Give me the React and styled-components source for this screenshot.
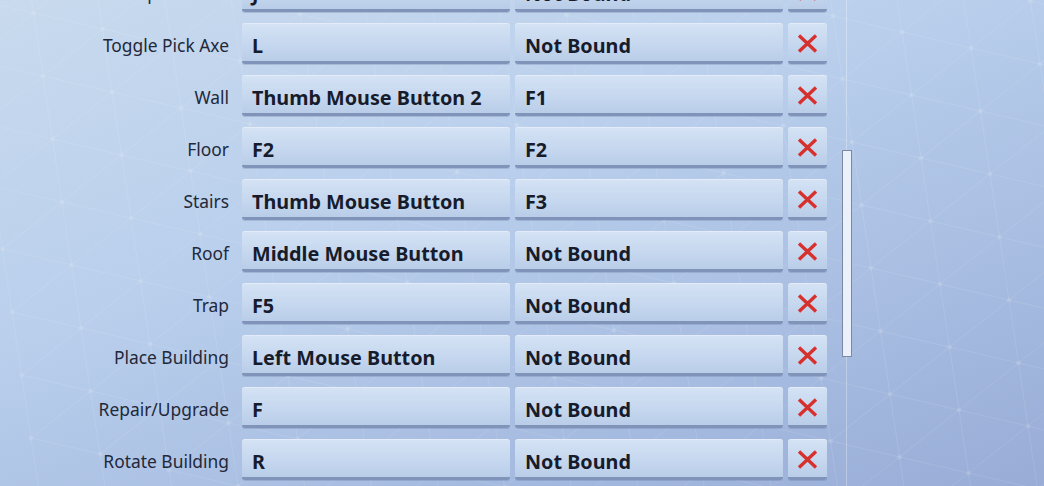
import React from "react";
import styled, { createGlobalStyle } from "styled-components";

const Global = createGlobalStyle`
  html, body { margin: 0; padding: 0; }
  body {
    width: 1044px;
    height: 486px;
    overflow: hidden;
    font-family: "Noto Sans", "Open Sans", sans-serif;
  }
`;

const Screen = styled.div`
  position: relative;
  width: 1044px;
  height: 486px;
  overflow: hidden;
  background: linear-gradient(160deg, #c9daee 0%, #b9cfec 40%, #a6bbe0 75%, #98acd6 100%);
  display: flex;
`;

const Mesh = styled.svg`
  position: absolute;
  inset: 0;
  pointer-events: none;
`;

const Viewport = styled.div`
  position: relative;
  display: flex;
  gap: 15px;
  height: 486px;
`;

const List = styled.div`
  display: flex;
  flex-direction: column;
  gap: 11px;
  margin-top: -29px;
`;

const Row = styled.div`
  display: grid;
  grid-template-columns: 237px 268px 268px 39px;
  column-gap: 5px;
  align-items: start;
`;

const Label = styled.div`
  height: 41px;
  padding-right: 8px;
  display: flex;
  align-items: center;
  justify-content: flex-end;
  padding-top: 2px;
  box-sizing: border-box;
  font-size: 17.4px;
  color: #222839;
  white-space: nowrap;
`;

const KeyBox = styled.div`
  height: 41px;
  box-sizing: border-box;
  border-radius: 3px;
  background: linear-gradient(180deg, #d4e2f4 0%, #c6d8ef 55%, #bacde8 100%);
  border-bottom: 3px solid #8094ba;
  box-shadow: inset 0 1px 0 rgba(255, 255, 255, 0.35), 0 1px 0 rgba(90, 110, 150, 0.25);
  display: flex;
  align-items: center;
  padding: 6px 0 0 10px;
  font-size: 19.8px;
  font-weight: 700;
  color: #171c2c;
  white-space: nowrap;
  overflow: hidden;
`;

const ClearBox = styled(KeyBox)`
  justify-content: center;
  padding: 2px 0 0 0;
`;

const Track = styled.div`
  width: 10px;
  display: flex;
  justify-content: center;
  position: relative;
  &::before {
    content: "";
    position: absolute;
    left: 4px;
    top: 0;
    bottom: 0;
    width: 1px;
    background: rgba(255, 255, 255, 0.3);
  }
`;

const Thumb = styled.div`
  position: relative;
  margin-top: 150px;
  width: 10px;
  height: 207px;
  box-sizing: border-box;
  background: #ebf1fa;
  border: 1px solid #7b88a4;
`;

const XIcon = () => (
  <svg width="21" height="19" viewBox="0 0 21 19">
    <path d="M2 1.5 L19 17.5 M19 1.5 L2 17.5" stroke="#d7312e" strokeWidth="3.4" strokeLinecap="butt" />
  </svg>
);

const rows = [
  ["Weapon Slot 6", "J", "Not Bound"],
  ["Toggle Pick Axe", "L", "Not Bound"],
  ["Wall", "Thumb Mouse Button 2", "F1"],
  ["Floor", "F2", "F2"],
  ["Stairs", "Thumb Mouse Button", "F3"],
  ["Roof", "Middle Mouse Button", "Not Bound"],
  ["Trap", "F5", "Not Bound"],
  ["Place Building", "Left Mouse Button", "Not Bound"],
  ["Repair/Upgrade", "F", "Not Bound"],
  ["Rotate Building", "R", "Not Bound"],
];

function buildMesh() {
  const lines = [];
  const nodes = [];
  const pt = (i, j) => [902 + 69 * i + 9.5 * j, 32 + 16 * i + 63 * j];
  for (let i = -14; i <= 3; i++) {
    for (let j = -3; j <= 10; j++) {
      const [x, y] = pt(i, j);
      const [x1, y1] = pt(i + 1, j);
      const [x2, y2] = pt(i, j + 1);
      const [x3, y3] = pt(i + 1, j - 1);
      lines.push(`M${x} ${y}L${x1} ${y1}`);
      lines.push(`M${x} ${y}L${x2} ${y2}`);
      lines.push(`M${x} ${y}L${x3} ${y3}`);
      nodes.push([x, y]);
    }
  }
  return { d: lines.join(""), nodes };
}

const mesh = buildMesh();

export default function App() {
  return (
    <>
      <Global />
      <Screen>
        <Mesh width="1044" height="486" viewBox="0 0 1044 486">
          <path d={mesh.d} stroke="rgba(255,255,255,0.1)" strokeWidth="1" fill="none" />
          {mesh.nodes.map(([x, y], k) => (
            <circle key={k} cx={x} cy={y} r="2.5" fill="rgba(255,255,255,0.1)" />
          ))}
        </Mesh>
        <Viewport>
          <List>
            {rows.map(([label, primary, secondary]) => (
              <Row key={label}>
                <Label>{label}</Label>
                <KeyBox>{primary}</KeyBox>
                <KeyBox>{secondary}</KeyBox>
                <ClearBox>
                  <XIcon />
                </ClearBox>
              </Row>
            ))}
          </List>
          <Track>
            <Thumb />
          </Track>
        </Viewport>
      </Screen>
    </>
  );
}
